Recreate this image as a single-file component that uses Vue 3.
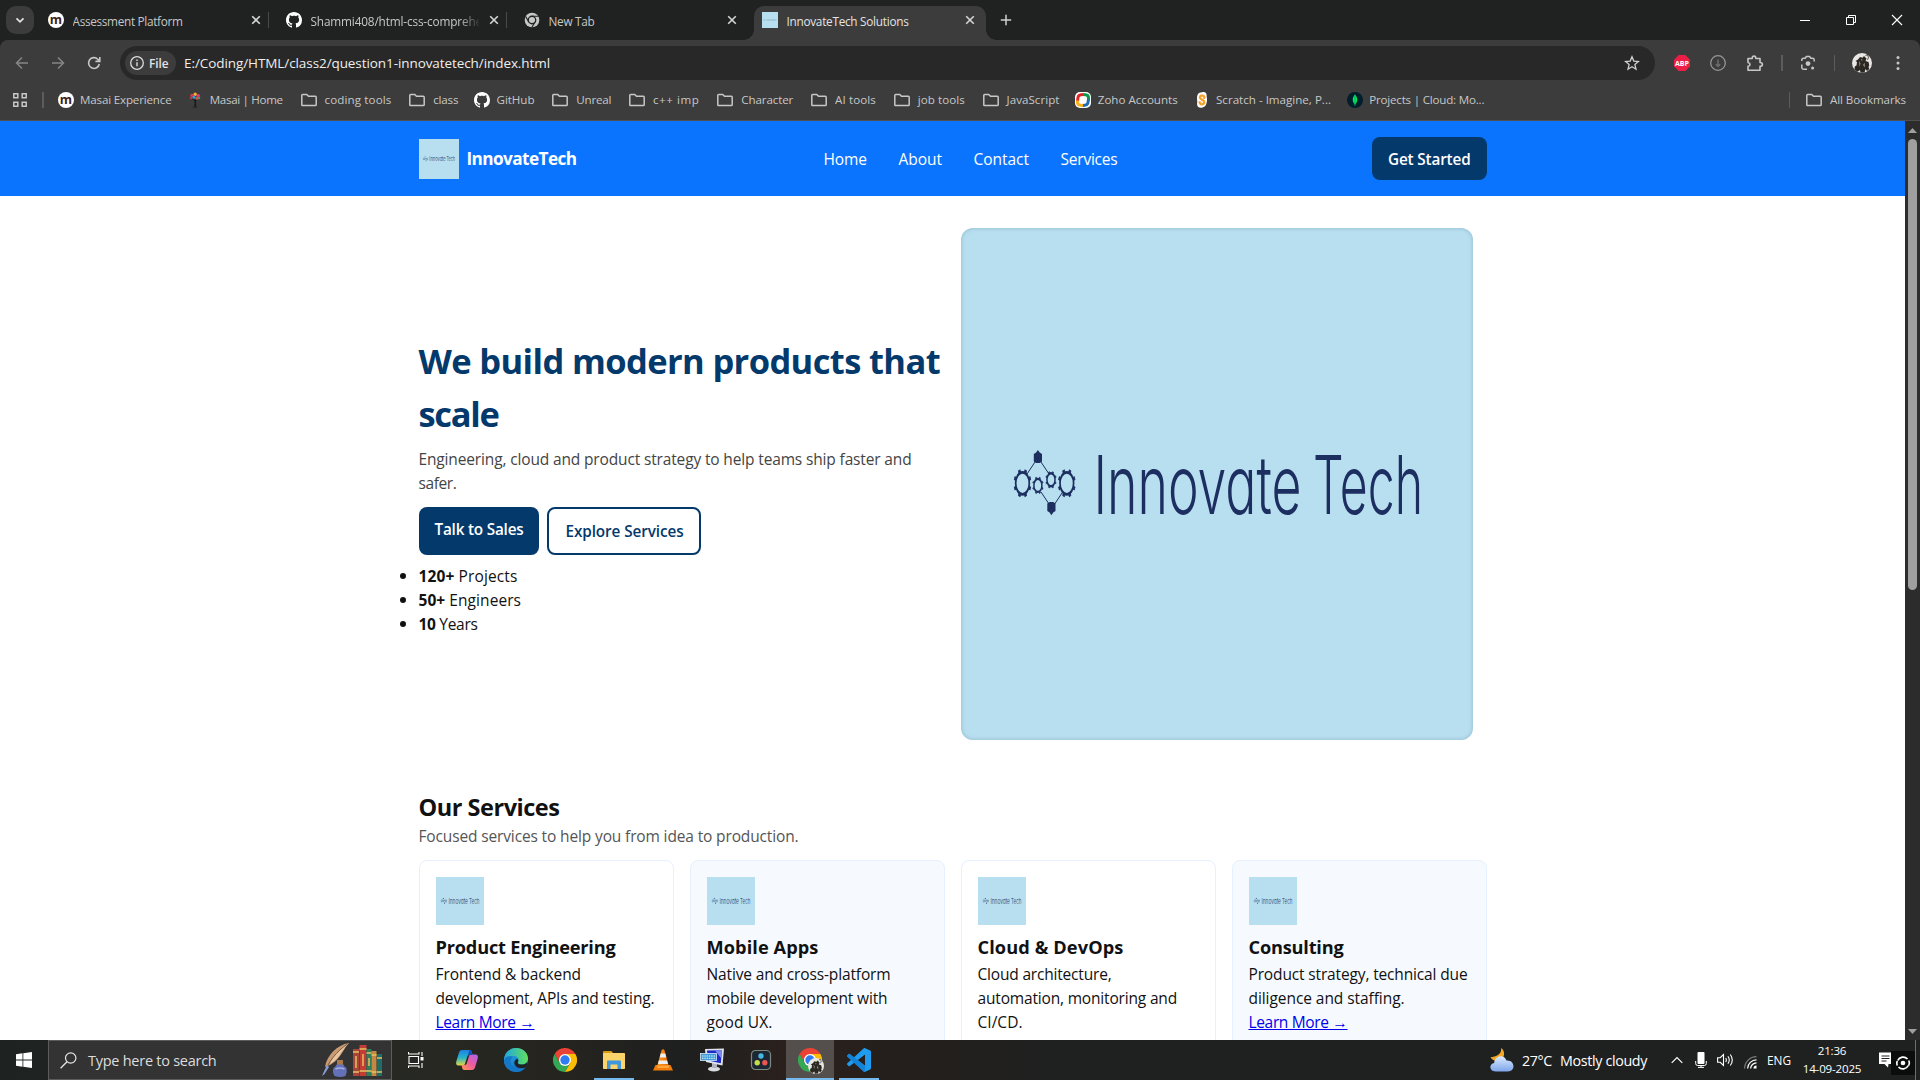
<script setup>
// Tightens or loosens letter spacing so a label takes up a given width in px.
const vFit = {
  mounted(el, { value }) {
    const range = document.createRange()
    range.selectNodeContents(el)
    const natural = range.getBoundingClientRect().width
    const count = el.textContent.length
    el.style.letterSpacing = ((value - natural) / count).toFixed(4) + 'px'
  },
}

const tabs = [
  { icon: 'i-masai', title: 'Assessment Platform', w: 110, divider: true },
  { icon: 'i-github', title: 'Shammi408/html-css-comprehensive', w: 199, divider: true, fade: true },
  { icon: 'i-chrome-grey', title: 'New Tab', w: 46 },
  { icon: 'i-site', title: 'InnovateTech Solutions', w: 122, active: true },
]

const bookmarks = [
  { icon: 'i-masai', label: 'Masai Experience', w: 91.5 },
  { icon: 'i-tree', label: 'Masai | Home', w: 73 },
  { icon: 'i-folder', label: 'coding tools', w: 67, folder: true },
  { icon: 'i-folder', label: 'class', w: 25, folder: true },
  { icon: 'i-github', label: 'GitHub', w: 38 },
  { icon: 'i-folder', label: 'Unreal', w: 35, folder: true },
  { icon: 'i-folder', label: 'c++ imp', w: 46.5, folder: true },
  { icon: 'i-folder', label: 'Character', w: 52, folder: true },
  { icon: 'i-folder', label: 'AI tools', w: 41, folder: true },
  { icon: 'i-folder', label: 'job tools', w: 47, folder: true },
  { icon: 'i-folder', label: 'JavaScript', w: 53, folder: true },
  { icon: 'i-zoho', label: 'Zoho Accounts', w: 80 },
  { icon: 'i-scratch', label: 'Scratch - Imagine, P...', w: 115 },
  { icon: 'i-mongo', label: 'Projects | Cloud: Mo...', w: 115 },
]

const nav = [
  { label: 'Home', w: 43.5 },
  { label: 'About', w: 43.5 },
  { label: 'Contact', w: 55.5 },
  { label: 'Services', w: 57 },
]

const stats = [
  { n: '120+', label: 'Projects', w: 99 },
  { n: '50+', label: 'Engineers', w: 102.5 },
  { n: '10', label: 'Years', w: 59 },
]

const services = [
  {
    title: 'Product Engineering', w: 180,
    lines: [['Frontend & backend', 145.5], ['development, APIs and testing.', 219]],
  },
  {
    title: 'Mobile Apps', w: 112,
    lines: [['Native and cross-platform', 184], ['mobile development with', 181], ['good UX.', 66]],
  },
  {
    title: 'Cloud & DevOps', w: 146,
    lines: [['Cloud architecture,', 134], ['automation, monitoring and', 199.5], ['CI/CD.', 45]],
  },
  {
    title: 'Consulting', w: 95,
    lines: [['Product strategy, technical due', 219], ['diligence and staffing.', 156]],
  },
]

const apps = [
  { icon: 'i-copilot' },
  { icon: 'i-edge' },
  { icon: 'i-chrome' },
  { icon: 'i-explorer', open: true },
  { icon: 'i-vlc' },
  { icon: 'i-pc' },
  { icon: 'i-resolve' },
  { icon: 'i-chrome', open: true, active: true },
  { icon: 'i-vscode', open: true },
]

const teeth = [0, 45, 90, 135, 180, 225, 270, 315]
</script>

<template>
  <div class="screen">
    <svg class="sprites" width="0" height="0" aria-hidden="true">
      <defs>
        <linearGradient id="g-edge" x1="0" y1="0" x2="1" y2="1">
          <stop offset="0" stop-color="#2fc3e6" /><stop offset=".5" stop-color="#1b86d6" /><stop offset="1" stop-color="#0d4fa0" />
        </linearGradient>
        <linearGradient id="g-edge2" x1="0" y1="0" x2="1" y2="0">
          <stop offset="0" stop-color="#1fa6e0" /><stop offset="1" stop-color="#62e05c" />
        </linearGradient>
        <linearGradient id="g-cop1" x1="0" y1="0" x2="0" y2="1">
          <stop offset="0" stop-color="#1d7fe6" /><stop offset=".5" stop-color="#27b4c9" /><stop offset="1" stop-color="#e8d53c" />
        </linearGradient>
        <linearGradient id="g-cop2" x1="1" y1="0" x2="0" y2="1">
          <stop offset="0" stop-color="#a466f0" /><stop offset=".5" stop-color="#ee5aa0" /><stop offset="1" stop-color="#ff9a4a" />
        </linearGradient>
        <linearGradient id="g-cloud" x1="0" y1="0" x2="0" y2="1">
          <stop offset="0" stop-color="#dbe9ff" /><stop offset="1" stop-color="#7ea6ea" />
        </linearGradient>
        <linearGradient id="g-cone" x1="0" y1="0" x2="1" y2="0">
          <stop offset="0" stop-color="#ff9a1f" /><stop offset="1" stop-color="#e56a00" />
        </linearGradient>
      </defs>
      <symbol id="i-masai" viewBox="0 0 16 16">
        <circle cx="8" cy="8" r="8" fill="#fff" />
        <text x="8" y="11.6" text-anchor="middle" font-family="Open Sans, sans-serif" font-weight="700" font-size="12.5" fill="#3a1f1c">m</text>
      </symbol>
      <symbol id="i-github" viewBox="0 0 16 16">
        <path fill="#fff" d="M8 0C3.58 0 0 3.58 0 8c0 3.54 2.29 6.53 5.47 7.59.4.07.55-.17.55-.38 0-.19-.01-.82-.01-1.49-2.01.37-2.53-.49-2.69-.94-.09-.23-.48-.94-.82-1.13-.28-.15-.68-.52-.01-.53.63-.01 1.08.58 1.23.82.72 1.21 1.87.87 2.33.66.07-.52.28-.87.51-1.07-1.78-.2-3.64-.89-3.64-3.95 0-.87.31-1.59.82-2.15-.08-.2-.36-1.02.08-2.12 0 0 .67-.21 2.2.82.64-.18 1.32-.27 2-.27.68 0 1.36.09 2 .27 1.53-1.04 2.2-.82 2.2-.82.44 1.1.16 1.92.08 2.12.51.56.82 1.27.82 2.15 0 3.07-1.87 3.75-3.65 3.95.29.25.54.73.54 1.48 0 1.07-.01 1.93-.01 2.2 0 .21.15.46.55.38A8.013 8.013 0 0016 8c0-4.42-3.58-8-8-8z" />
      </symbol>
      <symbol id="i-chrome-grey" viewBox="0 0 24 24">
        <circle cx="12" cy="12" r="11" fill="#c7c7c7" />
        <path d="M12 6.5H22M7.2 14.8L2.2 6.5M16.8 14.8L11.8 23" stroke="#202221" stroke-width="1.6" />
        <circle cx="12" cy="12" r="5.6" fill="#c7c7c7" stroke="#202221" stroke-width="2" />
      </symbol>
      <symbol id="i-site" viewBox="0 0 16 16">
        <rect width="16" height="16" fill="#b7dfef" />
        <path d="M1.5 8h1.8M4.5 8h10" stroke="#7f9db8" stroke-width=".9" stroke-dasharray="1.2 .4" />
      </symbol>
      <symbol id="i-folder" viewBox="0 0 16 16">
        <path d="M.8 12.7V3.3q0-.9.9-.9h4l1.8 1.9h6.8q.9 0 .9.9v7.5q0 .9-.9.9H1.7q-.9 0-.9-.9z" fill="none" stroke="#c7c7c7" stroke-width="1.5" />
      </symbol>
      <symbol id="i-tree" viewBox="0 0 16 16">
        <path d="M7.3 15.5l.4-6L5 6.5l3 1.5 2.5-2L8.9 9.5l.4 6z" fill="#15171c" />
        <path d="M5.500 15.500h5" stroke="#2a2c33" />
        <circle cx="5" cy="3.5" r="1.700" fill="#d93a52" /><circle cx="8.200" cy="2.200" r="1.700" fill="#f0b02c" />
        <circle cx="11.200" cy="3.600" r="1.700" fill="#e23c7e" /><circle cx="4" cy="6" r="1.300" fill="#b8354e" />
        <circle cx="7" cy="5.200" r="1.500" fill="#2aa7d8" /><circle cx="10" cy="6.300" r="1.500" fill="#e94b3c" /><circle cx="12.200" cy="6" r="1.100" fill="#38b27a" />
      </symbol>
      <symbol id="i-zoho" viewBox="0 0 16 16">
        <rect width="16" height="16" rx="5" fill="#fff" />
        <g fill="none" stroke-width="3">
          <path d="M2.500 9.500L3 5.500q.3-2.500 3-2.800L8 2.500" stroke="#e42527" /><path d="M8 2.500l2.500.2q3 .3 3 3V8" stroke="#089949" />
          <path d="M13.500 7.500l-.5 3q-.4 2.500-3 2.700l-2.500.3" stroke="#226db4" /><path d="M8 13.500l-2.500-.2q-3-.3-3-3V8.500" stroke="#f9b21d" />
        </g>
      </symbol>
      <symbol id="i-scratch" viewBox="0 0 16 16">
        <path d="M8 .3c3.500-.8 5 1 4.600 4 1 4.200.4 11-4.700 11.400C3.500 16 2.600 14 3.300 10 2.600 4.500 3 .6 8 .3z" fill="#fff" />
        <path d="M10.300 5.800c.3-2.800-4.300-3-4.400-.4-.1 2.500 4.500 2 4.400 4.900-.1 2.600-4.500 2.700-4.600 0" fill="none" stroke="#f7a32d" stroke-width="2.400" stroke-linecap="round" />
      </symbol>
      <symbol id="i-mongo" viewBox="0 0 16 16">
        <circle cx="8" cy="8" r="8" fill="#001e2b" />
        <path d="M8 2.600c3 3 3 7.300 0 10.300-3-3-3-7.300 0-10.300z" fill="#00ed64" /><path d="M8 2.600v11.300" stroke="#0a9a4c" stroke-width=".8" />
      </symbol>
      <symbol id="i-avatar" viewBox="0 0 20 20">
        <circle cx="10" cy="10" r="10" fill="#e9e7e4" />
        <path d="M2.500 16.500l.3-3 1.700-1 .5-3.500L3.500 8 6 6.500 8 4l2.500.8L12 3l2.500 2.500L13.500 8l3 1 .8 3.500-.8 1.500.8 2L15 18l-1.500-2-1 3.500-4 .2L8 17l-2.500 1.800z" fill="#2b2723" />
        <path d="M7 8l1.500 2.500-1 3.500zM12.500 9.500l-1.500 2.500 2 2.500zM9 6l1.500.5-.5 2z" fill="#9a938a" />
        <path d="M13.500 2.500l2-.8 1 3-1 2" fill="none" stroke="#2b2723" stroke-width=".8" />
      </symbol>
      <symbol id="i-chrome" viewBox="0 0 24 24">
        <path d="M1.600 6A12 12 0 0 1 22.400 6L12 7 6.800 15z" fill="#ea4335" />
        <path d="M1.600 6L6.800 15 12 18l5.200-3L12 24A12 12 0 0 1 1.600 6z" fill="#34a853" />
        <path d="M22.400 6A12 12 0 0 1 12 24l5.200-9L12 6z" fill="#fbbc04" />
        <circle cx="12" cy="12" r="6" fill="#fff" /><circle cx="12" cy="12" r="4.700" fill="#2f7bf0" />
      </symbol>
      <symbol id="i-copilot" viewBox="0 0 24 24">
        <path d="M7 2h7.500c1.500 0 2 1 2.300 2L17.500 7h-3c-1.500 0-2 .8-2.400 2l-2 6.500c-.4 1.200-1 2-2.600 2H3.500C1.200 17.500.7 15.500 1.300 13.500L4 4.500C4.500 3 5.500 2 7 2z" fill="url(#g-cop1)" />
        <path d="M17 22H9.500c-1.500 0-2-1-2.300-2L6.500 17h3c1.500 0 2-.8 2.400-2l2-6.500c.4-1.200 1-2 2.600-2h4c2.300 0 2.800 2 2.200 4L20 19.500C19.500 21 18.500 22 17 22z" fill="url(#g-cop2)" />
        <path d="M14.500 2c1.500 0 2 1 2.300 2l.7 3h-3c-1 0-1.600.4-2 1z" fill="#1450b8" />
      </symbol>
      <symbol id="i-edge" viewBox="0 0 24 24">
        <circle cx="12" cy="12" r="12" fill="url(#g-edge)" />
        <path d="M.3 10.500C1.500 4 6.500 0 12 0c7 0 12 5 12 10.500 0 3.500-2.800 6-6 6-2.600 0-4.400-1-4-2.200 1.500-2.500.3-6.300-5-6.300C4.500 8 1 9.300.3 10.500z" fill="url(#g-edge2)" />
        <path d="M9 8.800c-3 2.500-3 7 0 9.700 3.200 2.700 8.500 3 12.600.7C19 22.500 16 24 12.500 24 5 24 .2 18.500 0 12.500.5 9 5 7.500 9 8.800z" fill="#1577c8" />
        <path d="M13.800 14.200c-.4 1.300 1.500 2.500 4.200 2.400 2 0 3.800-.8 5-2.200l.4 2-1.800 2.800c-6 2.500-11.500-.5-11.300-5 .3-2 1.500-3 3-3.200 1.300.7 1.200 2 .5 3.200z" fill="#202221" />
      </symbol>
      <symbol id="i-explorer" viewBox="0 0 24 24">
        <path d="M1 4q0-1 1-1h7.500l1.500 2H22v4H1z" fill="#d99a14" /><rect x="1" y="5" width="22" height="16" rx=".8" fill="#fbd36b" />
        <path d="M5 13.500q0-1 1-1h12q1 0 1 1V21h-3.500v-4.500h-7V21H5z" fill="#3f97dc" />
      </symbol>
      <symbol id="i-vlc" viewBox="0 0 24 24">
        <path d="M10.600 2q1.400-1.500 2.800 0L17.500 17h-11z" fill="url(#g-cone)" />
        <path d="M9.700 5.500h4.600l1 4H8.700zM7.900 12.500h8.200l.9 3.500H7z" fill="#eceff1" />
        <path d="M4.500 17h15l2.500 5.500H2z" fill="#f07d0a" /><path d="M5.500 17.500h13l-1 2.500h-11z" fill="#ffa53a" />
      </symbol>
      <symbol id="i-pc" viewBox="0 0 24 24">
        <ellipse cx="14" cy="21" rx="6" ry="2.500" fill="#d9dde2" /><path d="M12 15h5v5h-5z" fill="#aeb5be" />
        <path d="M5 1l19-.5-1.500 17L6 14z" fill="#dfe3ea" /><path d="M7 2.500l15-.3-1.200 13L8 12.500z" fill="#1c28c8" />
        <path d="M15 2.400l7-.2-.8 8z" fill="#7b8cf0" />
        <rect x=".5" y="5.500" width="16" height="7" fill="#3e9bd8" stroke="#d8ecf8" stroke-width=".8" />
        <path d="M2 8h13M2 10.300h13" stroke="#e8f4fb" stroke-width="1" stroke-dasharray="1.500 .8" />
      </symbol>
      <symbol id="i-resolve" viewBox="0 0 24 24">
        <rect x="2.500" y="2.500" width="19" height="19" rx="4" fill="#1c2733" stroke="#7c8a80" stroke-width="1.200" />
        <circle cx="12" cy="8" r="2.700" fill="#45b7e0" /><circle cx="8.200" cy="14.800" r="2.700" fill="#c8dc4a" /><circle cx="15.800" cy="14.800" r="2.700" fill="#ef5552" />
      </symbol>
      <symbol id="i-vscode" viewBox="0 0 24 24">
        <path fill="#1f9cf0" fill-rule="evenodd" d="M23.150 2.587L18.210.210a1.494 1.494 0 0 0-1.705.290l-9.460 8.630-4.120-3.128a.999.999 0 0 0-1.276.057L.327 7.261A1 1 0 0 0 .326 8.740L3.899 12 .326 15.260a1 1 0 0 0 .001 1.479L1.650 17.940a.999.999 0 0 0 1.276.057l4.120-3.128 9.460 8.630a1.492 1.492 0 0 0 1.704.290l4.942-2.377A1.500 1.500 0 0 0 24 20.060V3.939a1.500 1.500 0 0 0-.850-1.352zm-5.146 14.861L10.826 12l7.178-5.448v10.896z" />
        <path fill="#0a6fc0" d="M.33 8.740l16.200 14.760 1.500-.3v-5.750L2.930 6a1 1 0 0 0-1.280.06L.33 7.260a1 1 0 0 0 0 1.480z" opacity=".55" />
      </symbol>
      <symbol id="i-close" viewBox="0 0 16 16">
        <path d="M4.200 4.200l7.600 7.600M11.800 4.200l-7.600 7.600" stroke="#d5d5d5" stroke-width="1.600" />
      </symbol>
    </svg>

    <!-- tab strip -->
    <div class="tabstrip">
      <button class="tab-search">
        <svg width="10" height="10" viewBox="0 0 10 10"><path d="M1.500 3.300L5 6.800l3.500-3.500" fill="none" stroke="#e3e3e3" stroke-width="1.700" /></svg>
      </button>
      <div v-for="t in tabs" :key="t.title" class="tab" :class="{ active: t.active, divider: t.divider, fade: t.fade }">
        <svg class="fav"><use :href="'#' + t.icon" /></svg>
        <span class="tab-title"><span v-fit="t.w">{{ t.title }}</span></span>
        <svg class="fav"><use href="#i-close" /></svg>
      </div>
      <svg class="plus" width="16" height="16" viewBox="0 0 16 16"><path d="M8 2.800v10.400M2.800 8h10.400" stroke="#d0d0d0" stroke-width="1.500" /></svg>
      <div class="win">
        <svg width="46" height="40" viewBox="0 0 46 40"><path d="M18 20.500h10" stroke="#fff" /></svg>
        <svg width="46" height="40" viewBox="0 0 46 40"><path d="M18.500 17.500h7v7h-7zM20.500 17v-1.500h7v7H26" fill="none" stroke="#fff" /></svg>
        <svg width="46" height="40" viewBox="0 0 46 40"><path d="M18 15l10 10M28 15L18 25" stroke="#fff" stroke-width="1.100" /></svg>
      </div>
    </div>

    <!-- toolbar -->
    <div class="toolbar">
      <svg class="tb" width="16" height="16" viewBox="0 0 16 16"><path d="M14 8H2.500M8 2.500L2.500 8 8 13.500" fill="none" stroke="#858585" stroke-width="1.500" /></svg>
      <svg class="tb" width="16" height="16" viewBox="0 0 16 16"><path d="M2 8h11.500M8 2.500L13.500 8 8 13.500" fill="none" stroke="#858585" stroke-width="1.500" /></svg>
      <svg class="tb" width="16" height="16" viewBox="0 0 16 16"><path d="M13.300 9A5.400 5.400 0 1 1 11.800 4.200L13.500 6M13.800 2v4.400H9.400" fill="none" stroke="#c7c7c7" stroke-width="1.600" /></svg>
      <div class="omnibox">
        <div class="chip">
          <svg width="16" height="16" viewBox="0 0 16 16"><circle cx="8" cy="8" r="6.300" fill="none" stroke="#dcdcdc" stroke-width="1.300" /><path d="M8 7.200v4M8 4.600v1.400" stroke="#dcdcdc" stroke-width="1.400" /></svg>
          <span v-fit="19.5">File</span>
        </div>
        <span class="url" v-fit="366">E:/Coding/HTML/class2/question1-innovatetech/index.html</span>
        <svg class="star" width="16" height="16" viewBox="0 0 16 16"><path d="M8 1.700l1.800 4.400 4.700.4-3.600 3.100 1.100 4.600L8 11.700l-4 2.500 1.100-4.600L1.500 6.500l4.700-.4z" fill="none" stroke="#d0d0d0" stroke-width="1.300" /></svg>
      </div>
      <div class="ext">
        <svg class="abp" width="16" height="16" viewBox="0 0 16 16"><path d="M4.700 0h6.600L16 4.700v6.600L11.300 16H4.700L0 11.300V4.700z" fill="#ed1e45" /><text x="8" y="10.600" text-anchor="middle" font-family="Open Sans, sans-serif" font-weight="700" font-size="7" fill="#fff">ABP</text></svg>
        <svg class="dl" width="16" height="16" viewBox="0 0 16 16"><circle cx="8" cy="8" r="7.300" fill="none" stroke="#969696" stroke-width="1.300" /><path d="M8 4.500v7M5.800 9.300L8 11.500l2.200-2.200" fill="none" stroke="#6d6d6d" stroke-width="1.500" /></svg>
        <svg class="puzzle" width="18" height="18" viewBox="0 0 18 18"><path d="M2 4.500h4.200q0-2.500 1.800-2.500t1.800 2.500h4.200v4q2.400.2 2.400 1.900t-2.400 1.900v4H2v-4q2-.3 2-1.900t-2-1.900z" fill="none" stroke="#c7c7c7" stroke-width="1.600" stroke-linejoin="round" /></svg>
        <i class="sep"></i>
        <svg class="lens" width="16" height="16" viewBox="0 0 16 16"><path d="M1.800 6V5q0-1.700 1.700-1.700h1.700L6.300 1.600h3.400l1.100 1.700h1.700q1.700 0 1.700 1.700v1.500M1.800 9.500v3q0 1.700 1.700 1.700h3.500" fill="none" stroke="#c7c7c7" stroke-width="1.500" /><circle cx="8" cy="8.600" r="2.400" fill="#c7c7c7" /><circle cx="12.600" cy="13" r="1.500" fill="#c7c7c7" /></svg>
        <i class="sep"></i>
        <svg class="avatar" width="20" height="20"><use href="#i-avatar" /></svg>
        <svg class="dots" width="4" height="16" viewBox="0 0 4 16"><circle cx="2" cy="2.500" r="1.500" fill="#c7c7c7" /><circle cx="2" cy="8" r="1.500" fill="#c7c7c7" /><circle cx="2" cy="13.500" r="1.500" fill="#c7c7c7" /></svg>
      </div>
    </div>

    <!-- bookmarks -->
    <div class="bookmarks">
      <svg class="grid4" width="14" height="14" viewBox="0 0 14 14"><path d="M.8.8h4v4h-4zM9.200.8h4v4h-4zM.8 9.200h4v4h-4zM9.200 9.200h4v4h-4z" fill="none" stroke="#c7c7c7" stroke-width="1.500" /></svg>
      <i class="sep"></i>
      <div class="bm-list">
        <div v-for="b in bookmarks" :key="b.label" class="bm" :class="{ folder: b.folder }">
          <svg class="fav"><use :href="'#' + b.icon" /></svg>
          <span :style="{ width: b.w + 'px' }" v-fit="b.w">{{ b.label }}</span>
        </div>
      </div>
      <i class="sep right"></i>
      <div class="bm folder all">
        <svg class="fav"><use href="#i-folder" /></svg>
        <span v-fit="76">All Bookmarks</span>
      </div>
    </div>

    <!-- page -->
    <div class="viewport">
      <div class="page">
        <header class="site-header">
          <div class="wrap bar">
            <svg class="logo" width="40" height="40" viewBox="0 0 512 512"><use href="#brand-art" /></svg>
            <strong class="brand" v-fit="110">InnovateTech</strong>
            <nav>
              <a v-for="n in nav" :key="n.label" :style="{ width: n.w + 'px' }" v-fit="n.w">{{ n.label }}</a>
            </nav>
            <a class="btn cta"><span v-fit="82.5">Get Started</span></a>
          </div>
        </header>

        <section class="wrap hero">
          <div class="copy">
            <h1><span v-fit="521.5">We build modern products that</span><br /><span v-fit="80">scale</span></h1>
            <p class="lead"><span v-fit="493">Engineering, cloud and product strategy to help teams ship faster and</span><br /><span v-fit="38">safer.</span></p>
            <div class="actions">
              <a class="btn"><span v-fit="89">Talk to Sales</span></a>
              <a class="btn outline"><span v-fit="118">Explore Services</span></a>
            </div>
            <ul>
              <li v-for="s in stats" :key="s.n"><span v-fit="s.w"><strong>{{ s.n }}</strong>&nbsp;{{ s.label }}</span></li>
            </ul>
          </div>
          <div class="art">
            <svg width="512" height="512" viewBox="0 0 512 512">
              <g id="brand-art">
                <rect width="512" height="512" fill="#b7dfef" />
                <g fill="#1d2f61">
                  <path d="M72.800 226l2.300-1.500 1.800-2.500 1.800 2.500 2.300 1.500v7.500l-2.300 1.500h-3.600l-2.300-1.500z" />
                  <path d="M86.300 275.500l2.300-1.500h3.600l2.300 1.500v7.500l-2.300 1.500-1.800 2.700-1.800-2.700-2.300-1.500z" />
                </g>
                <g stroke="#1d2f61" fill="none">
                  <path d="M74 234l-8 12M80 234l8 12M80 264l8 12M101 265l-8 12" stroke-width="1" />
                  <g v-for="cx in [61.5, 105.8]" :key="cx" :transform="`translate(${cx} 255.3) scale(.62 1)`">
                    <circle r="11" stroke-width="2.800" />
                    <path v-for="a in teeth" :key="a" d="M11.500 -1.500h2.300v3h-2.300z" :transform="`rotate(${a + 22.5})`" stroke-width="1" fill="#1d2f61" />
                  </g>
                  <g v-for="c in [[76.9, 257.4], [90, 251.8]]" :key="c[0]" :transform="`translate(${c[0]} ${c[1]}) scale(.62 1)`">
                    <circle r="6.500" stroke-width="2.400" />
                    <path v-for="a in teeth" :key="a" d="M7.500 -.8h1v1.600h-1z" :transform="`rotate(${a + 22.5})`" stroke-width=".8" fill="#1d2f61" />
                  </g>
                </g>
                <g class="wordmark" fill="#1d2f61">
                  <text x="132.500" y="286" textLength="208" lengthAdjust="spacingAndGlyphs">Innovate</text>
                  <text x="352" y="286" textLength="110" lengthAdjust="spacingAndGlyphs">Tech</text>
                </g>
              </g>
            </svg>
          </div>
        </section>

        <section class="wrap services">
          <h2><span v-fit="141">Our Services</span></h2>
          <p class="sub"><span v-fit="380">Focused services to help you from idea to production.</span></p>
          <div class="cards">
            <article v-for="s in services" :key="s.title" class="card">
              <svg width="48" height="48" viewBox="0 0 512 512"><use href="#brand-art" /></svg>
              <h3><span v-fit="s.w">{{ s.title }}</span></h3>
              <p><template v-for="l in s.lines" :key="l[0]"><span v-fit="l[1]">{{ l[0] }}</span><br /></template></p>
              <a class="more"><span v-fit="99">Learn More →</span></a>
            </article>
          </div>
        </section>
      </div>
      <div class="scroll">
        <svg width="15" height="18" viewBox="0 0 15 18"><path d="M3 12l4.500-5 4.500 5z" fill="#9f9f9f" /></svg>
        <div class="thumb"></div>
        <svg class="down" width="15" height="18" viewBox="0 0 15 18"><path d="M3 7l4.500 5L12 7z" fill="#9f9f9f" /></svg>
      </div>
    </div>

    <!-- taskbar -->
    <div class="taskbar">
      <div class="start"><svg width="16" height="16" viewBox="0 0 16 16"><path d="M0 2.300L6.500 1.300v6.200H0zM7.300 1.200L16 0v7.500H7.300zM0 8.400h6.500v6.300L0 13.700zM7.300 8.400H16V16l-8.700-1.200z" fill="#fff" /></svg></div>
      <div class="search">
        <svg width="17" height="17" viewBox="0 0 17 17"><circle cx="10.700" cy="6" r="5.200" fill="none" stroke="#e6e6e6" stroke-width="1.200" /><path d="M7 9.800L.6 16.300" stroke="#e6e6e6" stroke-width="1.300" /></svg>
        <span v-fit="128.5">Type here to search</span>
        <svg class="doodle" width="62" height="36" viewBox="0 0 62 36">
          <path d="M29 1C17 3 7 13 5 25c9-3 13-8 17-14 3-4 3-6 7-10z" fill="#c89b72" /><path d="M29 1C20 7 13 13 10 22c5-3 8-6 11-11 3-4 4-6 8-10z" fill="#e7c6a0" />
          <path d="M28 1.500C16 10 9 19 3 33" fill="none" stroke="#7c5b45" stroke-width="1" /><path d="M7 23L2 34l2.500-2L9 25z" fill="#8aa0dc" />
          <path d="M17 18h6v5h-6z" fill="#a9794c" /><path d="M16.500 22.500h7q.5 2 3 3.500 1 4-1 8-5 2-11 0-2.500-4-1-8 2.500-1.500 3-3.500z" fill="#6470b8" /><path d="M15.500 27q4-1.800 9 0" stroke="#a5afe6" stroke-width="1.500" fill="none" />
          <rect x="33" y="7" width="6" height="27" fill="#a8453a" /><rect x="39.500" y="3" width="7" height="31" fill="#c43c36" /><rect x="46.500" y="7" width="5" height="27" fill="#2f7d5b" /><rect x="51.500" y="9" width="5" height="25" fill="#c08a45" /><rect x="57" y="12" width="5" height="22" fill="#1d6e66" />
          <path d="M33 10h6M33 30h6M39.500 7h7M39.500 29h7M46.500 11h5M46.500 29h5M51.500 13h5M51.500 30h5M57 16h5M57 30h5" stroke="#e4c266" stroke-width="1.400" />
          <path d="M36 14v12M43 12v12M49 16v8" stroke="#e4b75a" stroke-width="1.600" />
        </svg>
      </div>
      <div class="tile view"><svg width="16" height="16" viewBox="0 0 16 16"><path d="M1 4.500h9.500v7H1zM.5 0v2h10.500V0M.5 16v-2h10.500v2M14 0v4M14 11v5" fill="none" stroke="#fff" stroke-width="1.100" /><path d="M12.500 5h3v3.500h-3z" fill="#fff" /></svg></div>
      <div class="apps">
        <div v-for="(a, i) in apps" :key="i" class="tile" :class="{ open: a.open, active: a.active }">
          <svg width="24" height="24"><use :href="'#' + a.icon" /></svg>
          <svg v-if="a.active" class="badge" width="16" height="16"><use href="#i-avatar" /></svg>
        </div>
      </div>
      <div class="tray">
        <svg width="24" height="24" viewBox="0 0 24 24"><path d="M11 0c.8 4-1.500 8.500-10.500 9.300C2 12 6 14 10 12.500 14.500 10.500 16 3 11 0z" fill="#f5a623" /><path d="M5.500 23.500C-1 23.500-1.200 15.500 4.200 15 4.500 7 14.500 6 16.500 12.500c8.500-.8 9.500 11 1.500 11z" fill="url(#g-cloud)" /></svg>
        <span class="temp" v-fit="30">27°C</span>
        <span class="sky" v-fit="87">Mostly cloudy</span>
        <svg class="caret" width="12" height="8" viewBox="0 0 12 8"><path d="M.7 6.800L6 1.500l5.300 5.300" fill="none" stroke="#fff" stroke-width="1.200" /></svg>
        <svg class="mic" width="12" height="16" viewBox="0 0 12 16"><rect x="2.500" width="7" height="12" rx="1" fill="#fff" /><path d="M.7 9v2.500q0 2 2 2h6.600q2 0 2-2V9M6 13.500V15M3 15.400h6" fill="none" stroke="#fff" /></svg>
        <svg class="spk" width="17" height="14" viewBox="0 0 17 14"><path d="M.6 4.700h2.600L6.500 1.500v11L3.200 9.300H.6z" fill="none" stroke="#fff" stroke-width="1.100" /><path d="M8.700 5q1.300 2 0 4M10.900 3.200q2.700 3.800 0 7.600M13.300 1.500q4 5.500 0 11" fill="none" stroke="#fff" stroke-width="1.100" /></svg>
        <svg class="wifi" width="13" height="13" viewBox="0 0 13 13"><g fill="none" stroke-width="1.200"><path d="M.6 12.500A12 12 0 0 1 12.500.7" stroke="#7b7d7c" /><path d="M3.600 12.500a9 9 0 0 1 8.900-8.700M6.600 12.500a6 6 0 0 1 5.900-5.700" stroke="#fff" /></g><path d="M12.500 9.500v3h-3a3 3 0 0 1 3-3z" fill="#fff" /></svg>
        <span class="eng" v-fit="24">ENG</span>
        <div class="clock"><span v-fit="28.5">21:36</span><span v-fit="58.5">14-09-2025</span></div>
        <svg class="note" width="14" height="16" viewBox="0 0 14 16"><path d="M0 .5h13v11.500H9.500L9 15.500 5.500 12H0z" fill="#fff" /><path d="M2.500 4h8M2.500 6.500h8M2.500 9h5" stroke="#202221" stroke-width="1.100" /></svg>
        <div class="focus"><svg width="16" height="16" viewBox="0 0 16 16"><g fill="none" stroke="#fff" stroke-width="1.700"><path d="M2.700 5.500A6 6 0 0 1 12.500 4M13.300 10.500A6 6 0 0 1 3.500 12M2.200 10.500A6 6 0 0 1 2.200 6M13.800 5.500a6 6 0 0 1 0 5" /></g><circle cx="8" cy="8" r="2.300" fill="#fff" /></svg></div>
        <i class="peek"></i>
      </div>
    </div>
  </div>
</template>

<style>
html,
body {
  margin: 0;
  background: #fff;
  overflow: hidden;
}
</style>

<style scoped>
* {
  box-sizing: border-box;
}
.screen {
  width: 1920px;
  height: 1080px;
  display: flex;
  flex-direction: column;
  overflow: hidden;
  font-family: 'Open Sans', 'Noto Sans', sans-serif;
  background: #202221;
}
.sprites {
  position: absolute;
}
svg {
  display: block;
  flex: none;
}
.fav {
  width: 16px;
  height: 16px;
}

/* tab strip */
.tabstrip {
  height: 40px;
  flex: none;
  display: flex;
  align-items: flex-start;
  background: #202221;
  padding-left: 6px;
}
.tab-search {
  width: 28px;
  height: 28px;
  margin: 6px 6px 0 0;
  padding: 0;
  border: 0;
  border-radius: 10px;
  background: #3c3c3c;
  display: grid;
  place-items: center;
}
.tab {
  position: relative;
  width: 238px;
  height: 28px;
  margin-top: 6px;
  padding-left: 8px;
  display: flex;
  align-items: center;
  color: #c7c7c7;
  font-size: 11.8px;
}
.tab.divider::after {
  content: '';
  position: absolute;
  right: 9px;
  top: 6px;
  width: 1.5px;
  height: 16px;
  background: #484a49;
}
.tab-title {
  width: 168px;
  margin: 0 7.500px 0 8.500px;
  padding-top: 2px;
  overflow: hidden;
  white-space: nowrap;
  line-height: 16px;
}
.tab.fade .tab-title {
  -webkit-mask-image: linear-gradient(90deg, #000 148px, transparent 170px);
  mask-image: linear-gradient(90deg, #000 148px, transparent 170px);
}
.tab.active {
  width: 232px;
  height: 34px;
  padding-bottom: 6px;
  border-radius: 10px 10px 0 0;
  background: #3c3c3c;
  color: #e3e3e3;
}
.tab.active .tab-title {
  margin-right: 7.500px;
}
.tab.active::before,
.tab.active::after {
  content: '';
  position: absolute;
  bottom: 0;
  width: 10px;
  height: 10px;
}
.tab.active::before {
  left: -10px;
  background: radial-gradient(circle at 0 0, transparent 9.5px, #3c3c3c 10px);
}
.tab.active::after {
  right: -10px;
  background: radial-gradient(circle at 100% 0, transparent 9.5px, #3c3c3c 10px);
}
.plus {
  margin: 12px 0 0 12px;
}
.win {
  margin-left: auto;
  display: flex;
}

/* toolbar */
.toolbar {
  height: 40px;
  flex: none;
  display: flex;
  align-items: center;
  background: #3c3c3c;
  border-radius: 8px 8px 0 0;
  padding: 6px 0 0 14px;
}
.tb {
  margin-right: 20px;
}
.omnibox {
  width: 1535px;
  height: 34px;
  margin-left: -2px;
  border-radius: 17px;
  background: #282828;
  display: flex;
  align-items: center;
  padding: 0 15px 0 5px;
}
.chip {
  height: 24px;
  width: 51px;
  border-radius: 12px;
  background: #3c3c3c;
  display: flex;
  align-items: center;
  gap: 4px;
  padding-left: 4px;
  color: #e3e3e3;
  font-size: 11.8px;
  font-weight: 600;
}
.url {
  margin-left: 8px;
  font-size: 13.5px;
  line-height: 18px;
  color: #eee;
  white-space: nowrap;
}
.star {
  margin-left: auto;
}
.ext {
  display: flex;
  align-items: center;
}
.abp {
  margin-left: 19px;
}
.dl {
  margin-left: 20px;
}
.puzzle {
  margin-left: 20px;
}
.ext .sep {
  margin-left: 17px;
}
.ext .lens {
  margin: 0 1px 0 17px;
}
.avatar {
  margin-left: 17px;
}
.dots {
  margin-left: 24px;
}
.sep {
  width: 1.5px;
  height: 16px;
  background: #5c5c5c;
  flex: none;
}

/* bookmarks */
.bookmarks {
  height: 41px;
  flex: none;
  display: flex;
  align-items: center;
  background: #3c3c3c;
  border-bottom: 1px solid #505050;
  padding: 0 14px 0 13px;
}
.bookmarks .sep {
  margin-left: 15px;
}
.bm-list {
  display: flex;
  gap: 15.750px;
  margin-left: 14px;
}
.bm {
  display: flex;
  align-items: center;
  gap: 6.5px;
  font-size: 11.6px;
  line-height: 16px;
  color: #c7c7c7;
  white-space: nowrap;
}
.bm.folder {
  padding-left: 2px;
  gap: 8px;
}
.bookmarks .right {
  margin-left: auto;
}
.all {
  margin-left: 14px;
}

/* page */
.viewport {
  flex: 1;
  min-height: 0;
  display: flex;
  background: #fff;
}
.page {
  width: 1905px;
  height: 919px;
  overflow: hidden;
  font-size: 15.5px;
  line-height: 24px;
  color: #111;
}
.page span,
.page a,
.brand {
  white-space: nowrap;
}
.wrap {
  width: 1068px;
  margin: 0 auto;
}
.site-header {
  height: 75px;
  background: #0b74ff;
}
.bar {
  height: 75px;
  display: flex;
  align-items: center;
  color: #fff;
}
.logo {
  margin-top: 1px;
}
.brand {
  width: 110px;
  margin-left: 8px;
  padding-top: 1px;
  font-size: 17.2px;
  font-weight: 700;
}
nav {
  display: flex;
  gap: 31.5px;
  margin-left: 247px;
}
.btn {
  background: #04396c;
  color: #fff;
  border-radius: 8px;
  font-weight: 600;
  padding: 10px 16px;
  font-size: 15.3px;
}
.cta {
  width: 114.5px;
  height: 43px;
  margin-left: auto;
  line-height: 24px;
  white-space: nowrap;
}
.hero {
  display: grid;
  grid-template-columns: 526px 526px;
  gap: 16px;
  align-items: center;
  padding: 32px 0;
}
.copy {
  padding-top: 1px;
}
h1 {
  margin: 0;
  padding-top: 2px;
  font-size: 34.5px;
  line-height: 52.8px;
  color: #04396c;
  font-weight: 700;
}
.lead {
  margin: 7px 0 0;
  color: #444;
}
.actions {
  display: flex;
  gap: 8px;
  margin: 12px 0 9px;
}
.actions .btn {
  height: 48px;
  width: 120px;
}
.actions .btn.outline {
  width: 154px;
  padding-left: 17px;
  background: #fff;
  color: #04396c;
  border: 2px solid #04396c;
}
ul {
  margin: 0;
  padding: 0;
}
li::marker {
  font-size: 17px;
}
.art svg {
  border-radius: 12px;
}
.art {
  position: relative;
  width: 512px;
  height: 512px;
}
.art::after {
  content: '';
  position: absolute;
  inset: 0;
  border-radius: 12px;
  box-shadow: inset 0 0 4px rgba(70, 110, 130, 0.35);
}
.wordmark {
  font-family: Inter, 'Open Sans', sans-serif;
  font-size: 81px;
  font-weight: 350;
  font-feature-settings: 'cv11' 1, 'ss03' 1;
}
.services {
  padding-top: 17px;
}
h2 {
  margin: 0;
  font-size: 23.5px;
  line-height: 36px;
}
.sub {
  margin: -1px 0 12px;
  color: #555;
}
.cards {
  display: grid;
  grid-template-columns: repeat(4, 255px);
  gap: 16px;
}
.card {
  height: 240px;
  padding: 16px;
  border: 1px solid #e6f0ff;
  border-radius: 8px;
  background: #fff;
}
.card:nth-child(even) {
  background: #f6faff;
}
h3 {
  margin: 8px 0 0.7px;
  font-size: 18.2px;
  line-height: 28px;
}
.card p {
  margin: 0;
}
.more {
  color: #0000ee;
  text-decoration: underline;
}
.scroll {
  width: 15px;
  background: #2c2c2c;
  display: flex;
  flex-direction: column;
  align-items: center;
}
.thumb {
  width: 9px;
  height: 451px;
  border-radius: 5px;
  background: #9f9f9f;
}
.down {
  margin-top: auto;
}

/* taskbar */
.taskbar {
  height: 40px;
  flex: none;
  display: flex;
  background: linear-gradient(90deg, #1e2322 0, #272822 440px, #25241f 560px, #1e1f1f 680px, #2b211d 790px, #241f1c 900px, #1f2120 1050px);
  color: #fff;
  white-space: nowrap;
}
.start {
  width: 48px;
  display: grid;
  place-items: center;
}
.search {
  width: 344px;
  border: 1px solid #5c5c5c;
  background: #333;
  display: flex;
  align-items: center;
  padding-left: 11px;
  font-size: 14.5px;
  color: #ddd;
}
.search span {
  width: 128.5px;
  margin-left: 11px;
}
.doodle {
  margin-left: 103px;
}
.tile {
  position: relative;
  width: 48px;
  height: 40px;
  display: grid;
  place-items: center;
}
.apps {
  display: flex;
  gap: 1px;
  margin-left: 3px;
}
.tile.open::after {
  content: '';
  position: absolute;
  left: 4px;
  right: 4px;
  bottom: 0;
  height: 2px;
  background: #76b9ed;
}
.tile.active {
  background: #544f4c;
}
.tile.active::after {
  left: 0;
  right: 0;
}
.badge {
  position: absolute;
  left: 22px;
  top: 18px;
}
.tray {
  margin-left: auto;
  display: flex;
  align-items: center;
  font-size: 14.3px;
}
.temp {
  width: 30px;
  margin-left: 8px;
}
.sky {
  width: 87px;
  margin-left: 8px;
}
.caret {
  margin-left: 24px;
}
.mic {
  margin-left: 12px;
}
.spk {
  margin-left: 10px;
}
.wifi {
  margin: 4px 0 0 10px;
}
.eng {
  width: 24px;
  margin-left: 10px;
  font-size: 11.8px;
}
.clock {
  width: 60px;
  margin: 0 0 0 11px;
  display: flex;
  flex-direction: column;
  align-items: center;
  font-size: 11.6px;
  line-height: 18px;
}
.note {
  margin-left: 17px;
}
.focus {
  width: 24px;
  height: 24px;
  margin: 6px 0 0 -2px;
  background: #0b0c0c;
  display: grid;
  place-items: center;
}
.peek {
  width: 1px;
  height: 40px;
  margin-right: 4px;
  background: #6d6f6e;
}
</style>
